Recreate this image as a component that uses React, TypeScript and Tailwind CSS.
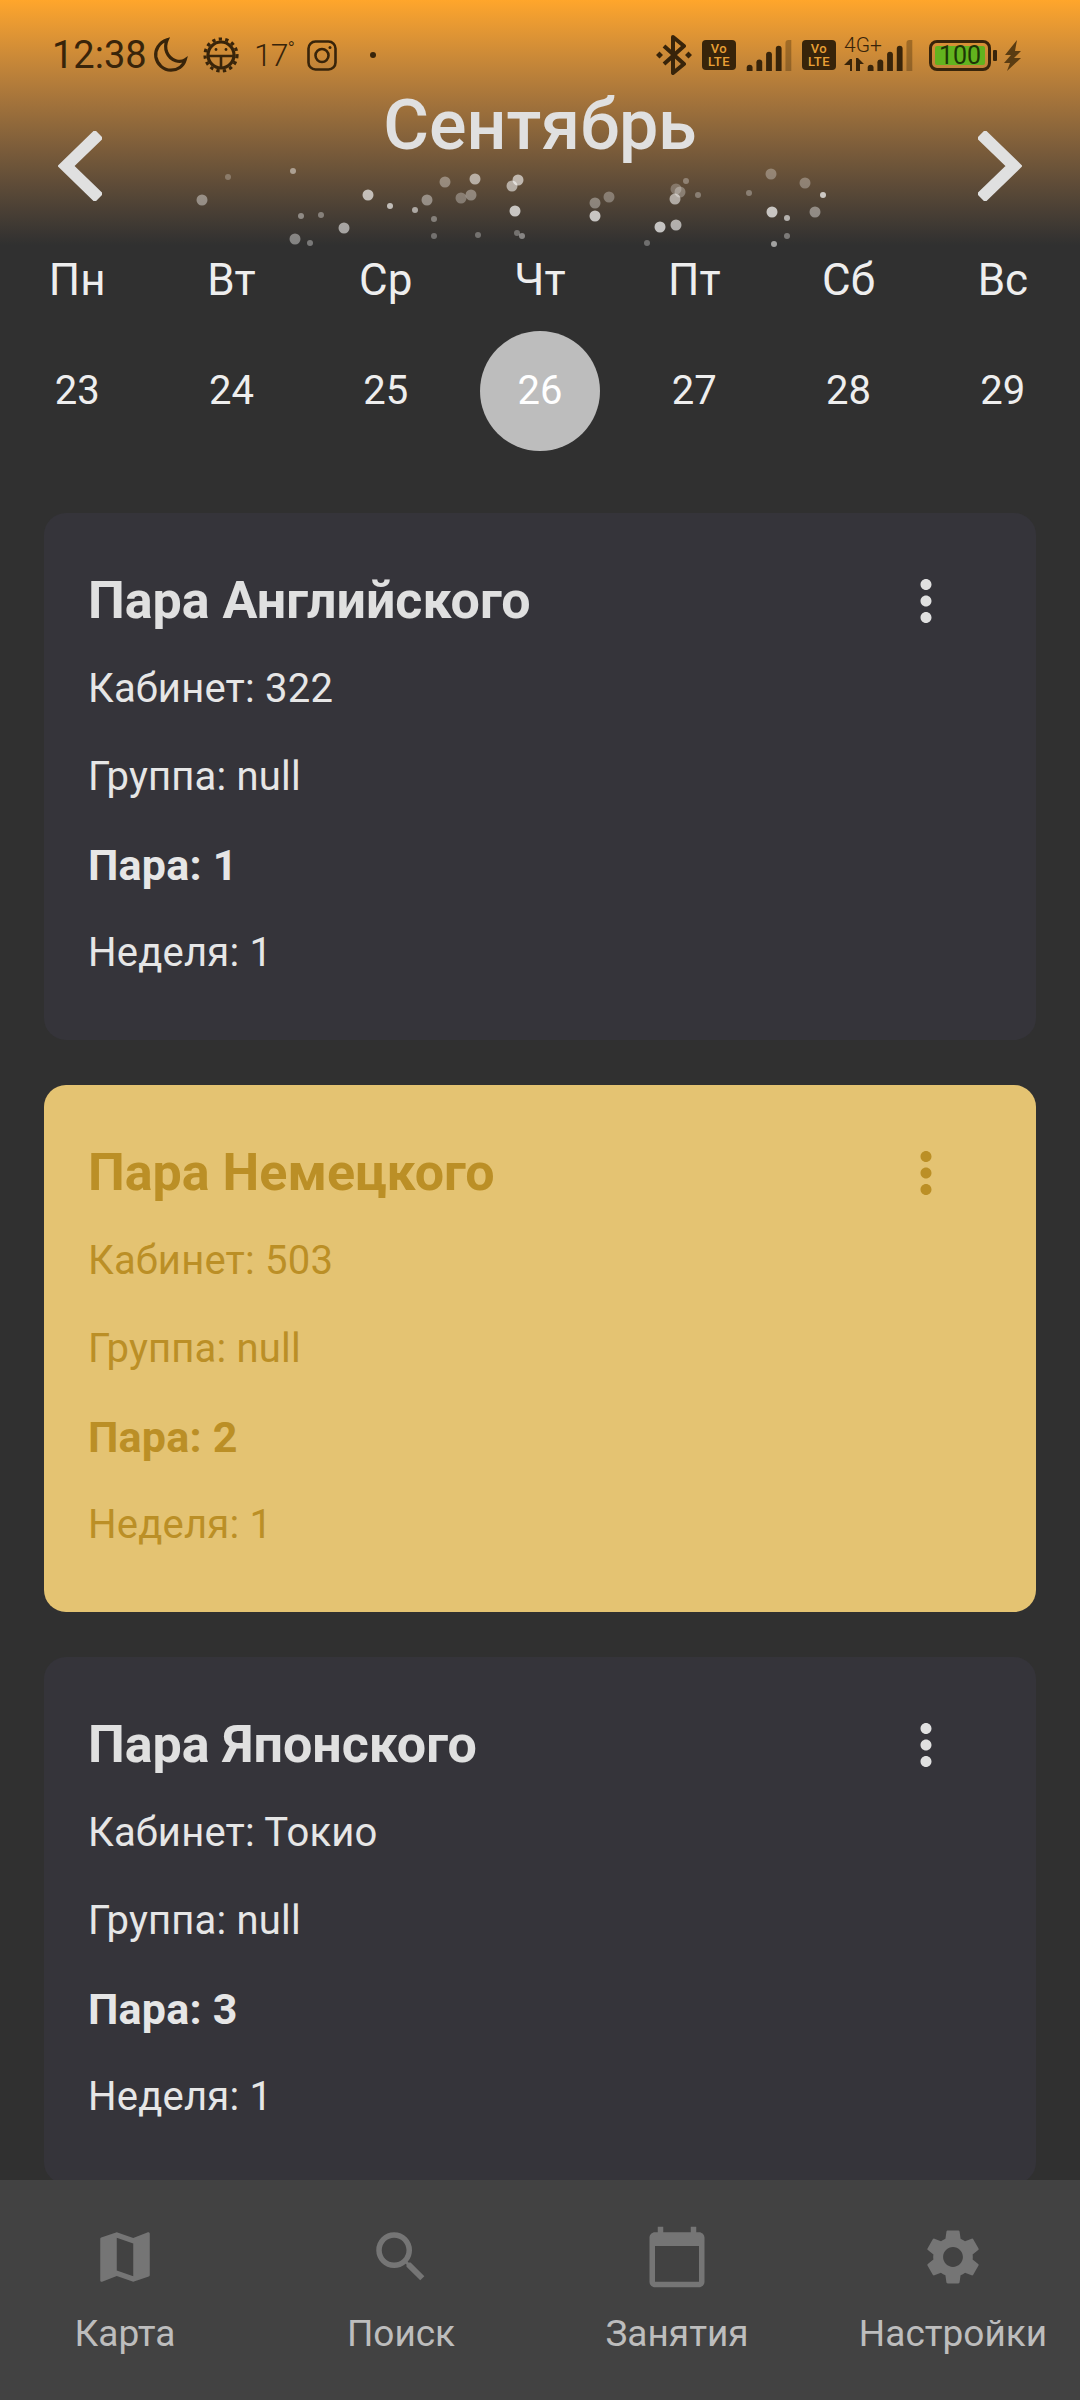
import React from 'react'
import { MdCalendarToday, MdMap, MdMoreVert, MdSearch, MdSettings } from 'react-icons/md'

const days = [
  ['Пн', '23'],
  ['Вт', '24'],
  ['Ср', '25'],
  ['Чт', '26'],
  ['Пт', '27'],
  ['Сб', '28'],
  ['Вс', '29'],
]

const lessons = [
  { title: 'Пара Английского', room: '322', num: '1', active: false },
  { title: 'Пара Немецкого', room: '503', num: '2', active: true },
  { title: 'Пара Японского', room: 'Токио', num: '3', active: false },
]

const tabs = [
  { label: 'Карта', icon: MdMap },
  { label: 'Поиск', icon: MdSearch },
  { label: 'Занятия', icon: MdCalendarToday },
  { label: 'Настройки', icon: MdSettings },
]

// x, y, r, opacity
const dots = [
  [228, 177, 3, 0.25], [293, 171, 3, 0.45], [202, 200, 5.5, 0.4], [301, 216, 3, 0.4], [321, 215, 3, 0.35],
  [344, 228, 5.5, 0.55], [295, 239, 5.5, 0.4], [310, 243, 3, 0.35], [368, 195, 5.5, 0.65], [390, 206, 3, 0.65],
  [415, 210, 3, 0.55], [427, 200, 5.5, 0.4], [445, 182, 5.5, 0.35], [475, 179, 5.5, 0.55], [461, 198, 5.5, 0.3],
  [471, 195, 5.5, 0.35], [434, 219, 3, 0.35], [434, 236, 3, 0.3], [478, 235, 3, 0.3], [512, 186, 5.5, 0.55],
  [518, 180, 5.5, 0.6], [515, 211, 5.5, 0.7], [517, 233, 3, 0.3], [522, 236, 3, 0.4], [609, 197, 5.5, 0.3],
  [595, 203, 5.5, 0.35], [595, 216, 5.5, 0.7], [660, 227, 5.5, 0.7], [676, 225, 5.5, 0.6], [647, 243, 3, 0.3],
  [686, 181, 3, 0.3], [676, 189, 5.5, 0.25], [680, 192, 5.5, 0.3], [675, 199, 5.5, 0.55], [698, 195, 3, 0.3],
  [771, 174, 5.5, 0.3], [805, 183, 5.5, 0.3], [823, 195, 3, 0.7], [749, 193, 3, 0.3], [772, 212, 5.5, 0.7],
  [787, 218, 3, 0.6], [815, 212, 5.5, 0.4], [787, 236, 3, 0.35], [774, 244, 3, 0.55],
]

const ink = '#38240a'

const Moon = () => (
  <svg width="36" height="36" viewBox="0 0 36 38" fill="none" stroke={ink} strokeWidth="3.4" strokeLinecap="round">
    <path d="M15 3C6 6 2 14 3 21c1.500 8 8 14 16 14 7 0 13-4 15-11-3 2-7 2-10 1C15 22 11 12 15 3z" />
  </svg>
)

const Ladybug = () => (
  <svg width="36" height="36" viewBox="0 0 36 36" fill="none" stroke={ink}>
    <circle cx="18" cy="18" r="13" strokeWidth="3.200" />
    <circle cx="18" cy="18" r="16" strokeWidth="3.200" strokeDasharray="3.300 3.300" />
    <path d="M5 19h26M18 19v11" strokeWidth="2.600" />
    <circle cx="13" cy="12.500" r="1.400" fill={ink} stroke="none" />
    <circle cx="23" cy="12.500" r="1.400" fill={ink} stroke="none" />
  </svg>
)

const Instagram = () => (
  <svg width="30" height="31" viewBox="0 0 30 31" fill="none" stroke={ink} strokeWidth="2.600">
    <rect x="1.500" y="1.500" width="27" height="28" rx="7" />
    <circle cx="15" cy="15.500" r="6.500" />
    <circle cx="23" cy="7.500" r="1.500" fill={ink} stroke="none" />
  </svg>
)

const Bluetooth = () => (
  <svg width="36" height="40" viewBox="0 0 36 40" fill="none" stroke={ink} strokeWidth="4" strokeLinejoin="round">
    <path d="M8 11l20 18-11 9V2l11 9L8 29" />
    <path d="M0 20l3.500-3.500L7 20l-3.500 3.500zM29 20l3.500-3.500L36 20l-3.500 3.500z" fill={ink} stroke="none" />
  </svg>
)

const Volte = () => (
  <div className="w-[34px] h-[30px] rounded-[4px] bg-[#38240a] flex flex-col items-center justify-center text-[#e9a136] font-medium text-[13px] leading-[13px] tracking-[0.5px]">
    <span>Vo</span>
    <span>LTE</span>
  </div>
)

const Bars = () => (
  <svg width="48" height="31" viewBox="0 0 48 32" fill={ink}>
    <path d="M1 32v-3.500q0-3 3-3t3 3V32z" />
    <path d="M11 32V23q0-3 3-3t3 3v9z" />
    <path d="M21 32V15q0-3 3-3t3 3v17z" />
    <path d="M31 32V9q0-3 3-3t3 3v23z" />
    <path d="M41 32V3q0-3 3-3h3v32z" opacity="0.35" />
  </svg>
)

const Network4g = () => (
  <div className="flex flex-col items-start w-[36px] -mt-[4px]">
    <span className="text-[21px] leading-[20px] text-[#38240a] font-light">4G+</span>
    <svg width="22" height="13" viewBox="0 0 22 13" fill={ink} className="mt-[3px]">
      <path d="M0 7l6-6h2v12H6V7zM12 0h2l6 6h-4v7h-4z" />
    </svg>
  </div>
)

const Battery = () => (
  <div className="flex items-center gap-[2px]">
    <div className="w-[62px] h-[31px] rounded-[8px] border-[3px] border-[#38240a] p-[3px]">
      <div className="h-full rounded-[2px] bg-[#62b31e] flex items-center justify-center text-[25px] leading-none text-[#1d3506]">
        100
      </div>
    </div>
    <div className="w-[4px] h-[11px] rounded-[1px] bg-[#38240a]" />
  </div>
)

const Bolt = () => (
  <svg width="18" height="31" viewBox="0 0 18 31" fill="#5a3c12">
    <path d="M13 0L1 15h6L0 23h6l-3 8 14-13h-7l7-7h-6z" />
  </svg>
)

const StatusBar = () => (
  <div className="flex items-center h-[38px] pl-[52px] pr-[58px] mt-[36px] text-[#38240a]">
    <span className="text-[38px] leading-none w-[100px]">12:38</span>
    <Moon />
    <div className="ml-[15px]">
      <Ladybug />
    </div>
    <span className="ml-[15px] text-[32px] font-light leading-none w-[36px] tracking-[-1px]">
      17<sup className="text-[20px] -top-[10px] font-light">°</sup>
    </span>
    <div className="ml-[17px]">
      <Instagram />
    </div>
    <div className="ml-[33px] w-[6px] h-[6px] rounded-full bg-[#38240a]" />
    <div className="ml-auto flex items-center">
      <Bluetooth />
      <div className="ml-[10px]">
        <Volte />
      </div>
      <div className="ml-[9px]">
        <Bars />
      </div>
      <div className="ml-[9px]">
        <Volte />
      </div>
      <div className="ml-[8px]">
        <Network4g />
      </div>
      <div className="-ml-[14px]">
        <Bars />
      </div>
      <div className="ml-[15px]">
        <Battery />
      </div>
      <div className="ml-[7px]">
        <Bolt />
      </div>
    </div>
  </div>
)

const Chevron = ({ flip }: { flip?: boolean }) => (
  <svg width="44" height="70" viewBox="0 0 44 70" className={flip ? 'rotate-180' : ''} fill="none" stroke="#e0e0e0" strokeWidth="12">
    <path d="M41 3L8 35l33 32" />
  </svg>
)

const Header = () => (
  <header className="relative h-[245px] shrink-0 bg-gradient-to-b from-[#ffa62b] to-[#303030]">
    <StatusBar />
    <svg width="1080" height="260" viewBox="0 0 1080 260" className="absolute inset-0" fill="#fff">
      {dots.map(([x, y, r, o], i) => (
        <circle key={i} cx={x} cy={y} r={r} opacity={o} />
      ))}
    </svg>
    <div className="relative flex items-start justify-between px-[58px] mt-[13px]">
      <div className="mt-[44px]">
        <Chevron />
      </div>
      <h1 className="text-[70px] leading-[76px] font-medium text-[#e0e0e0]">Сентябрь</h1>
      <div className="mt-[44px]">
        <Chevron flip />
      </div>
    </div>
  </header>
)

const Calendar = () => (
  <section className="grid grid-cols-7 shrink-0 text-[#eeeeee]">
    {days.map(([name, date]) => (
      <div key={name} className="flex flex-col items-center">
        <span className="h-[70px] flex items-center text-[44px]">{name}</span>
        <span
          className={
            'mt-[16px] w-[120px] h-[120px] rounded-full flex items-center justify-center text-[40px] ' +
            (date === '26' ? 'bg-[#bdbdbd] text-white' : '')
          }
        >
          {date}
        </span>
      </div>
    ))}
  </section>
)

const LessonCard = ({ title, room, num, active }: { title: string; room: string; num: string; active: boolean }) => (
  <article
    className={
      'shrink-0 rounded-[22px] pl-[44px] pr-[83px] pt-[44px] pb-[43px] text-[40px] tracking-[0.2px] ' +
      (active ? 'bg-[#e4c372] text-[#bb8f26]' : 'bg-[#35343a] text-[#e6e6e6]')
    }
  >
    <div className="flex items-center justify-between h-[88px]">
      <h2 className={'text-[52px] font-bold tracking-normal ' + (active ? '' : 'text-[#e0e0e0]')}>{title}</h2>
      <MdMoreVert size={66} className={active ? 'text-[#bb8f26] -mr-[6px]' : 'text-[#e0e0e0] -mr-[6px]'} />
    </div>
    <p className="h-[88px] leading-[88px]">Кабинет: {room}</p>
    <p className="h-[88px] leading-[88px]">Группа: null</p>
    <p className="h-[88px] leading-[88px] font-bold text-[43px]">Пара: {num}</p>
    <p className="h-[88px] leading-[88px]">Неделя: 1</p>
  </article>
)

const BottomNav = () => (
  <nav className="h-[220px] shrink-0 bg-[#424242] flex justify-center pt-[44px] pr-[2px]">
    {tabs.map(({ label, icon: Icon }) => (
      <div key={label} className="w-[276px] shrink-0 flex flex-col items-center">
        <Icon size={66} className="text-[#757575]" />
        <span className="mt-[16px] text-[37px] text-[#bdbdbd]">{label}</span>
      </div>
    ))}
  </nav>
)

export default function App() {
  return (
    <div className="w-[1080px] h-[2400px] flex flex-col overflow-hidden bg-[#303030] font-['Roboto',sans-serif]">
      <Header />
      <Calendar />
      <main className="flex-1 min-h-0 overflow-hidden flex flex-col gap-[45px] px-[44px] pt-[62px]">
        {lessons.map((l) => (
          <LessonCard key={l.title} {...l} />
        ))}
      </main>
      <BottomNav />
    </div>
  )
}
